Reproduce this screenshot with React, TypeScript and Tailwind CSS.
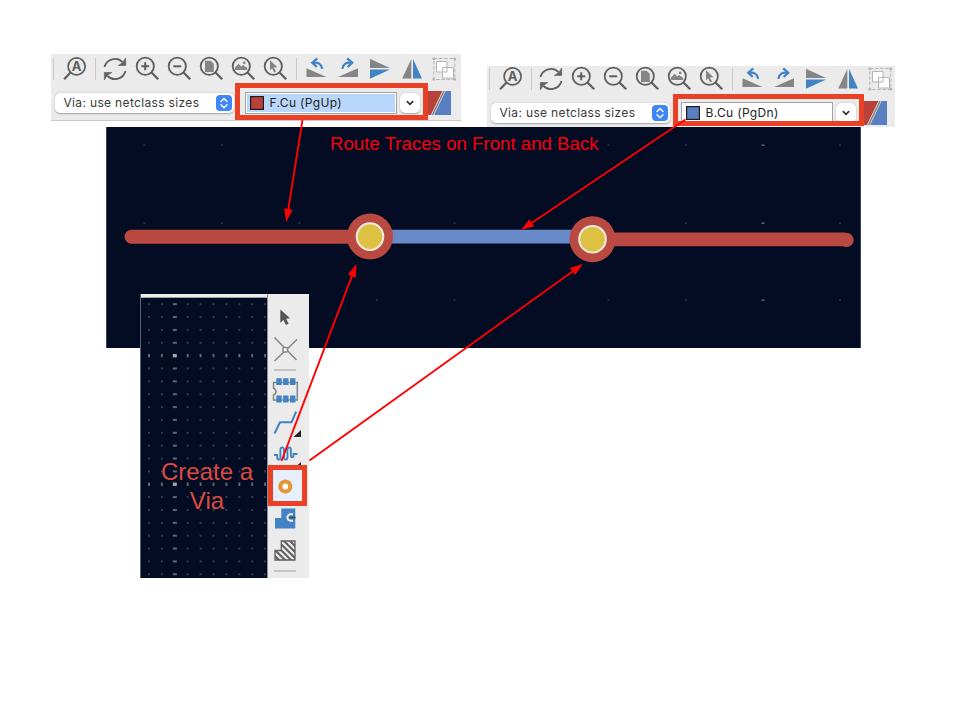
import React from "react";

const GREY = "#5f5f5f";
const BLUE = "#4183c4";

const icons: Record<string, React.ReactNode> = {
  refresh: (
    <g fill="none" stroke={GREY} strokeWidth="1.8">
      <path d="M5.500 14A10.800 10.800 0 0 1 23.500 9" />
      <path d="M26.500 18A10.800 10.800 0 0 1 8.500 23" />
      <path d="M26.700 5v7.500h-7.500l4.300-2.700z" fill={GREY} strokeWidth=".6" />
      <path d="M5.300 27v-7.500h7.500l-4.300 2.700z" fill={GREY} strokeWidth=".6" />
    </g>
  ),
  zoomIn: <path d="M14.200 9.300v8M10.200 13.300h8" stroke={GREY} strokeWidth="2" />,
  zoomOut: <path d="M10.200 13.300h8" stroke={GREY} strokeWidth="2" />,
  page: <path d="M10 7.800h5.600l3.200 3v8.200H10z" fill="#858585" />,
  image: (
    <g fill="#858585">
      <path d="M7.800 17v-2.300l3.800-4 2.600 2.800 2-1.600 4.100 3.200v1.900z" />
      <circle cx="17.200" cy="9.800" r="1.400" />
    </g>
  ),
  cursor: <path d="M11 7.200l7.500 7-3.700.3 2.300 4-2 1-2-4.200-2.100 2.200z" fill="#858585" />,
  rotL: (
    <g>
      <path d="M6.500 15.300v8.700h20z" fill="#858585" />
      <path d="M12.500 9.800c5.500-1 9 1.200 9.700 6" fill="none" stroke={BLUE} strokeWidth="2.300" />
      <path d="M17.300 5.300l-5 4.400 4.500 4.300" fill="none" stroke={BLUE} strokeWidth="2.300" />
    </g>
  ),
  rotR: (
    <g>
      <path d="M26 15.300v8.700H6z" fill="#858585" />
      <path d="M20 9.800c-5.500-1-9 1.200-9.700 6" fill="none" stroke={BLUE} strokeWidth="2.300" />
      <path d="M15.200 5.300l5 4.400-4.500 4.300" fill="none" stroke={BLUE} strokeWidth="2.300" />
    </g>
  ),
  flipV: (
    <g>
      <path d="M6 5.800v9.300h20z" fill="#858585" />
      <path d="M6 25.700v-9.200h20z" fill={BLUE} />
    </g>
  ),
  flipH: (
    <g>
      <path d="M15.300 6v19.500H6.200z" fill="#858585" />
      <path d="M17 6v19.500h9z" fill={BLUE} />
    </g>
  ),
  group: (
    <g stroke="#b5b5b5">
      <path d="M5.800 5.500h21v21h-21z" fill="none" strokeDasharray="3.500 1.700" />
      <path d="M8.500 8.500h10.500v10.500H8.500zM14.500 14.500h11v10.500h-11z" fill="#fff" />
      <path d="M4.500 4.500h2.600v2.600H4.500zM25.500 4.500h2.600v2.600h-2.600zM4.500 25h2.600v2.600H4.500zM25.500 25h2.600v2.600h-2.600z" fill="#b5b5b5" stroke="none" />
    </g>
  ),
};

const lensed = ["zoomIn", "zoomOut", "page", "image", "cursor"];

function Tool({ name }: { name: string }) {
  return (
    <svg className="size-8 shrink-0" viewBox="0 0 32 32">
      {lensed.includes(name) && (
        <g fill="none" stroke={GREY} strokeWidth="1.800">
          <circle cx="14.300" cy="13.300" r="8.600" />
          <path d="M20.500 19.500l6.700 6.700" strokeWidth="2.300" />
        </g>
      )}
      {icons[name]}
    </svg>
  );
}

function FindTool() {
  return (
    <div className="relative size-8 shrink-0">
      <svg className="size-8" viewBox="0 0 32 32">
        <circle cx="17.600" cy="13.400" r="8.500" fill="none" stroke={GREY} strokeWidth="1.700" />
        <path d="M11.500 19.500l-6.400 6.700" stroke={GREY} strokeWidth="2.200" />
      </svg>
      <span className="absolute left-[9px] top-[6px] w-[17px] text-center text-[13px] font-bold leading-[15px] text-[#5f5f5f]">A</span>
    </div>
  );
}

function Rule({ pad }: { pad: string }) {
  return (
    <div className={`flex h-8 shrink-0 items-center ${pad}`}>
      <div className="h-[22px] w-px bg-[#c9c9c9]" />
    </div>
  );
}

function Toolbar({ layer, color, active }: { layer: string; color: string; active: boolean }) {
  return (
    <div className="flex h-full w-full flex-col overflow-hidden bg-[#ebebeb] font-['Inter',sans-serif]">
      <div className="flex h-[30px] shrink-0 items-center">
        <Rule pad="w-2 pl-[2px]" />
        <FindTool />
        <Rule pad="w-2 pl-[4px]" />
        {["refresh", ...lensed].map((n) => <Tool key={n} name={n} />)}
        <Rule pad="w-[9px] pl-[5px]" />
        {["rotL", "rotR", "flipV", "flipH", "group"].map((n) => <Tool key={n} name={n} />)}
      </div>
      <div className="flex h-[37px] shrink-0 items-center pl-1">
        <div className="flex h-5 w-[179px] shrink-0 items-center justify-between rounded-[5px] bg-white pl-[8.500px] pr-[2.500px] shadow-[0_0.500px_1.500px_rgba(0,0,0,0.300)]">
          <span className="whitespace-nowrap text-[12px] leading-none tracking-[0.340px] text-[#3a3a3a]">Via: use netclass sizes</span>
          <svg className="size-[16px] shrink-0" viewBox="0 0 16 16">
            <rect width="16" height="16" rx="4" fill="#3f86f7" />
            <path d="M5 6.500l3-3 3 3M5 9.700l3 3 3-3" fill="none" stroke="#fff" strokeWidth="1.400" strokeLinecap="round" strokeLinejoin="round" />
          </svg>
        </div>
        <div className="ml-[11px] flex h-[22px] w-[152px] shrink-0 items-center border border-[#a3a3a3] bg-white p-px">
          <div className={`flex h-full w-full items-center pl-[3px] ${active ? "bg-[#b9d6fb]" : "bg-white"}`}>
            <svg className="size-[14px] shrink-0" viewBox="0 0 14 14">
              <rect x=".6" y=".6" width="12.800" height="12.800" fill={color} stroke="#1c1c1c" strokeWidth="1.200" />
            </svg>
            <span className="ml-[5.500px] whitespace-nowrap pt-px text-[12px] leading-none tracking-[0.340px] text-[#222]">{layer}</span>
          </div>
        </div>
        <div className="ml-[3px] flex h-5 w-5 shrink-0 items-center justify-center rounded-[5px] bg-white shadow-[0_0.500px_1.500px_rgba(0,0,0,0.300)]">
          <svg className="size-2" viewBox="0 0 8 8">
            <path d="M1.300 2.700L4 5.300l2.700-2.600" fill="none" stroke="#333" strokeWidth="1.700" strokeLinecap="round" />
          </svg>
        </div>
        <svg className="ml-[7px] h-6 w-6 shrink-0" viewBox="0 0 24 24">
          <path d="M0 0h15.500L4 24H0z" fill="#b9413b" />
          <path d="M18.500 0H24v24H7z" fill="#587fc2" />
          <path d="M15.500 0h3L7 24H4z" fill="#c9c3bb" />
          <path d="M17 0L5.500 24" stroke="#77716c" strokeWidth="1" />
        </svg>
      </div>
    </div>
  );
}

function Via({ x, y }: { x: number; y: number }) {
  return (
    <g>
      <circle cx={x} cy={y} r="23" fill="#b94941" />
      <circle cx={x} cy={y} r="13.300" fill="#dec143" stroke="#f0ece4" strokeWidth="2" />
    </g>
  );
}

function Board() {
  const xs = [38.500, 116, 193.500, 271, 348.500, 425.500, 502.500, 580, 657, 734];
  return (
    <svg className="block h-full w-full bg-[#030c23]" viewBox="0 0 755 221">
      {[18, 96, 173].map((y) =>
        xs.map((x) => (
          <rect key={`${x}-${y}`} x={x === 657 ? x - 1.500 : x - 1} y={y - 0.500} width={x === 657 ? 3 : 2} height="1.300" fill={x === 657 ? "#6c727b" : "#343c4d"} />
        ))
      )}
      <path d="M280 109.700H470" stroke="#688ac9" strokeWidth="13.800" />
      <path d="M25.500 109.700H262" stroke="#b94941" strokeWidth="14" strokeLinecap="round" />
      <path d="M486 112.300H739" stroke="#b94941" strokeWidth="13.800" />
      <circle cx="740.500" cy="113" r="7.200" fill="#b94941" />
      <Via x={264} y={109.600} />
      <Via x={486.500} y={112.200} />
      <path d="M.5 0V221M754.500 0V221" stroke="#3b4355" />
    </svg>
  );
}

function Grid() {
  const cols = Array.from({ length: 10 }, (_, i) => 8 + i * 12.900);
  const rows = Array.from({ length: 22 }, (_, i) => 6.200 + i * 12.860);
  return (
    <svg className="block h-full w-full" viewBox="0 0 126 280">
      {rows.map((y, r) =>
        cols.map((x, c) => {
          const major = c === 2;
          const bright = r === 4 || r === 14;
          const w = major ? 4 : 2;
          const h = bright ? 3.400 : 2;
          return <rect key={`${r}-${c}`} x={x - w / 2} y={y - h / 2} width={w} height={h} fill={major && bright ? "#a1a4a8" : major || bright ? "#60666f" : "#333b4b"} />;
        })
      )}
    </svg>
  );
}

const sideIcons: React.ReactNode[] = [
  <path d="M11.300 8.500v13.300l3.100-2.900 2.500 5.200 2.700-1.300-2.500-5 4-.6z" fill="#555" />,
  <g stroke="#858585" strokeWidth="1.500" fill="none">
    <path d="M5.500 4.500l22 22.500M28 6.500L5.500 28" />
    <rect x="14" y="14.500" width="4.500" height="4.500" rx="1" fill="#fff" />
  </g>,
  <g>
    <path d="M4.500 8.500h23.800v17.500H4.500v-5c3.300-.8 3.300-6 0-6.800z" fill="none" stroke="#858585" strokeWidth="1.500" />
    <path d="M7.300 4.200h5.400v6.900h-5.400zM14.100 4.200h5.400v6.900h-5.400zM21 4.200h5.400v6.900h-5.400zM7.300 21.500h5.400v6.900h-5.400zM14.100 21.500h5.400v6.900h-5.400zM21 21.500h5.400v6.900h-5.400z" fill={BLUE} />
  </g>,
  <g>
    <path d="M5.500 27.500l5.500-11.200h11.500l4.700-10.800" fill="none" stroke={BLUE} strokeWidth="2" />
    <path d="M32 24v7h-7.500z" fill="#222" />
  </g>,
  <g>
    <path d="M5 17h3.200v2c0 3.500 3.200 3.500 3.200 0v-7c0-3.500 3.600-3.500 3.600 0v7c0 3.500 3.400 3.500 3.400 0v-7c0-3.500 3.500-3.500 3.500 0v5c0 3 2.600 3 2.600.5v-1.500h4" fill="none" stroke={BLUE} strokeWidth="1.900" />
    <path d="M32 24v7h-7.500z" fill="#222" />
  </g>,
  <g>
    <rect x="3.500" y="1" width="28" height="30" fill="#e5effd" />
    <circle cx="16.300" cy="16.500" r="5" fill="#fff" stroke="#e49736" strokeWidth="4.200" />
  </g>,
  <g>
    <path d="M6 16h6.300v-9.500h14v20H6z" fill={BLUE} />
    <path d="M26.500 15.500h-6" stroke="#444" strokeWidth="1.700" />
    <path d="M24 12.200h-2.300a3.300 3.300 0 0 0 0 6.600h2.300" fill="none" stroke="#eee" strokeWidth="2" />
  </g>,
  <g>
    <defs>
      <clipPath id="zone"><path d="M6 16.500h6.300V7h13.700v19H6z" /></clipPath>
    </defs>
    <g clipPath="url(#zone)" stroke="#5f5f5f" strokeWidth="2">
      <path d="M-10 6l22 22M-4 6l22 22M2 6l22 22M8 6l22 22M14 6l22 22M20 6l22 22" />
    </g>
    <path d="M6 16.500h6.300V7h13.700v19H6z" fill="none" stroke="#5f5f5f" strokeWidth="1.300" />
  </g>,
];

function SideTools() {
  const rule = <div className="mx-auto h-[9px] w-[22px] shrink-0 pt-1"><div className="h-[1.500px] bg-[#c4c4c4]" /></div>;
  return (
    <div className="flex w-[42px] shrink-0 flex-col border-l border-[#8a8d93] bg-[#ebebeb] pt-[7px] pr-[8px]">
      {sideIcons.map((icon, i) => (
        <React.Fragment key={i}>
          {i === 2 && rule}
          <svg className="mx-auto size-8 shrink-0" viewBox="0 0 32 32">{icon}</svg>
        </React.Fragment>
      ))}
      {rule}
    </div>
  );
}

function ViaPanel() {
  return (
    <div className="flex h-full flex-row bg-[#ebebeb]">
      <div className="flex w-[127px] flex-col border-l border-[#59606d]">
        <div className="h-[4px] shrink-0 border-b border-[#9da0a5] bg-[#ececec]" />
        <div className="relative min-h-0 flex-1 bg-[#030c23]">
          <Grid />
          <p className="absolute inset-x-0 top-[159px] pl-[6px] text-center font-['Liberation_Sans',sans-serif] text-[24px] leading-[29px] text-[#dd4a40]">
            Create a<br />Via
          </p>
        </div>
      </div>
      <SideTools />
    </div>
  );
}

function Arrow({ from, to }: { from: [number, number]; to: [number, number] }) {
  const angle = (Math.atan2(to[1] - from[1], to[0] - from[0]) * 180) / Math.PI;
  const len = Math.hypot(to[0] - from[0], to[1] - from[1]);
  return (
    <g transform={`translate(${from[0]} ${from[1]}) rotate(${angle})`} fill="#f00">
      <path d={`M0 0H${len - 10}`} stroke="#f00" strokeWidth="1.900" />
      <path d={`M${len} 0l-13 4.300v-8.600z`} />
    </g>
  );
}

export default function App() {
  return (
    <main className="relative h-[720px] w-[960px] overflow-hidden bg-white">
      <section className="absolute left-[51px] top-[54px] h-[67px] w-[410px] border-b border-[#c9c9c9]">
        <Toolbar layer="F.Cu (PgUp)" color="#b9413b" active />
      </section>
      <section className="absolute left-[487px] top-[66px] h-[61px] w-[408px]">
        <div className="-mt-[2px] h-[63px] [clip-path:inset(2px_0_0_0)]">
          <Toolbar layer="B.Cu (PgDn)" color="#587fc2" active={false} />
        </div>
      </section>
      <section className="absolute left-[106px] top-[127px] h-[221px] w-[755px]">
        <Board />
      </section>
      <h1 className="absolute left-[330px] top-[133px] whitespace-nowrap font-['Liberation_Sans',sans-serif] text-[18.670px] leading-[22px] text-[#f5000a]">
        Route Traces on Front and Back
      </h1>
      <section className="absolute left-[140px] top-[294px] h-[284px] w-[169px]">
        <ViaPanel />
      </section>
      <div className="absolute left-[235px] top-[83px] h-[37px] w-[193px] border-[5px] border-[#ea4025]" />
      <div className="absolute left-[673px] top-[94px] h-[32px] w-[191px] border-[5px] border-[#ea4025]" />
      <div className="absolute left-[268px] top-[465px] h-[41px] w-[39px] border-[5px] border-[#ea4025]" />
      <svg className="absolute inset-0 size-full" viewBox="0 0 960 720">
        <Arrow from={[302.500, 120]} to={[286.300, 222]} />
        <Arrow from={[685.500, 119.500]} to={[521, 230]} />
        <Arrow from={[281.500, 461]} to={[356.500, 264]} />
        <Arrow from={[309.500, 460.500]} to={[583, 264]} />
      </svg>
    </main>
  );
}
